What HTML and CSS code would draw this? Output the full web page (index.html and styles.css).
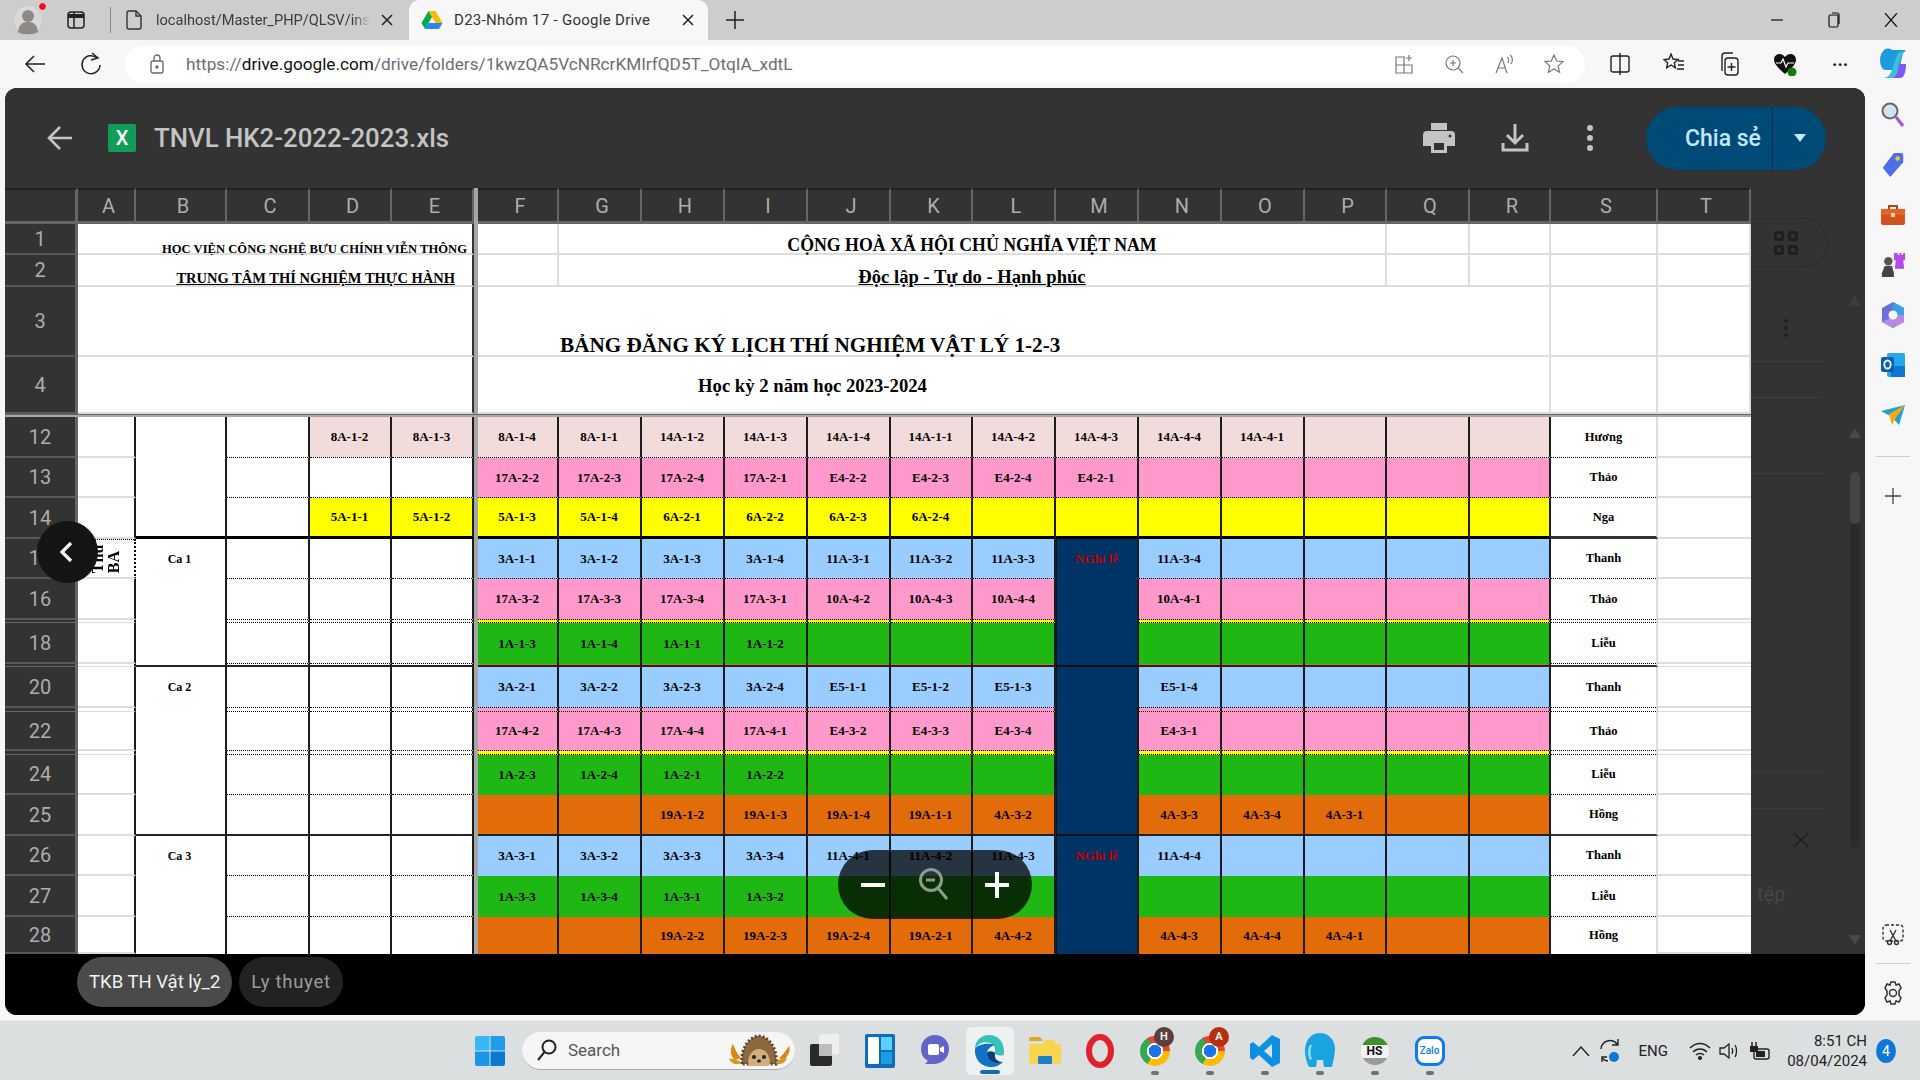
FILE: index.html
```html
<!DOCTYPE html>
<html lang="vi">
<head>
<meta charset="utf-8">
<title>D23-Nhóm 17 - Google Drive</title>
<link rel="stylesheet" href="styles.css">
</head>
<body>
<div class="tabstrip">
  <div class="avatar"><svg width="30" height="30" viewBox="0 0 30 30"><circle cx="15" cy="15" r="14" fill="#d8d8d8"/><circle cx="15" cy="11" r="6" fill="#8d8a86"/><path d="M5 27c1-8 5-10 10-10s9 2 10 10c-3 3-17 3-20 0z" fill="#8d8a86"/></svg><i class="reddot"></i></div>
  <svg class="vtabs" width="20" height="20" viewBox="0 0 20 20" fill="none" stroke="#222" stroke-width="1.5"><rect x="2" y="2" width="16" height="16" rx="3"/><path d="M8 2v16"/><path d="M2 6h16" stroke-width="4"/></svg>
  <i class="tabdiv"></i>
  <div class="tab">
    <svg width="18" height="22" viewBox="0 0 18 22" fill="none" stroke="#333" stroke-width="1.4"><path d="M2 4a2 2 0 0 1 2-2h7l5 5v11a2 2 0 0 1-2 2H4a2 2 0 0 1-2-2z"/><path d="M11 2v5h5"/></svg>
    <span class="tabtext">localhost/Master_PHP/QLSV/inst</span>
    <svg class="tabx" width="12" height="12" viewBox="0 0 12 12" stroke="#222" stroke-width="1.5"><path d="M1 1l10 10M11 1L1 11"/></svg>
  </div>
  <div class="tab active">
    <svg width="22" height="20" viewBox="0 0 22 20"><path d="M7.5 1h7l7 12h-7z" fill="#fbbc04"/><path d="M7.5 1L0.5 13l3.5 6 7-12z" fill="#00ac47"/><path d="M4 19h14l3.500-6H7.500z" fill="#2684fc"/></svg>
    <span class="tabtext">D23-Nhóm 17 - Google Drive</span>
    <svg class="tabx" width="12" height="12" viewBox="0 0 12 12" stroke="#222" stroke-width="1.5"><path d="M1 1l10 10M11 1L1 11"/></svg>
  </div>
  <svg class="newtab" width="20" height="20" viewBox="0 0 20 20" stroke="#222" stroke-width="1.5"><path d="M10 1v18M1 10h18"/></svg>
  <div class="winctl">
    <svg width="14" height="14" viewBox="0 0 14 14" stroke="#111" stroke-width="1.2"><path d="M1 7h12"/></svg>
    <svg width="14" height="16" viewBox="0 0 14 16" fill="none" stroke="#111" stroke-width="1.2"><rect x="2" y="3" width="9" height="12" rx="1.500"/><path d="M5 1h5a2 2 0 0 1 2 2v9"/></svg>
    <svg width="14" height="14" viewBox="0 0 14 14" stroke="#111" stroke-width="1.2"><path d="M1 0l12 14M13 0L1 14"/></svg>
  </div>
</div>

<div class="toolbar">
  <svg class="tool-back" width="22" height="20" viewBox="0 0 22 20" fill="none" stroke="#222" stroke-width="1.6"><path d="M21 10H2M10 2l-8 8 8 8"/></svg>
  <svg class="tool-ref" width="22" height="24" viewBox="0 0 22 24" fill="none" stroke="#222" stroke-width="1.5"><path d="M17 6a9 9 0 1 0 3 7"/><path d="M12 1l6 5-7 2"/></svg>
  <div class="urlbar">
    <svg width="14" height="20" viewBox="0 0 14 20" fill="none" stroke="#666" stroke-width="1.3"><rect x="1" y="7" width="12" height="12" rx="2"/><path d="M4 7V4a3 3 0 0 1 6 0v3"/><circle cx="7" cy="13" r="1" fill="#666"/></svg>
    <span class="url"><span class="url-dim">https://</span><span class="url-host">drive.google.com</span><span class="url-dim">/drive/folders/1kwzQA5VcNRcrKMIrfQD5T_OtqIA_xdtL</span></span>
    <span class="grow"></span>
    <svg width="20" height="20" viewBox="0 0 20 20" fill="none" stroke="#777" stroke-width="1.2"><path d="M11 3H2v16h16v-8H2M10 3v16"/><path d="M15 1v6M12 4h6"/></svg>
    <svg width="20" height="20" viewBox="0 0 20 20" fill="none" stroke="#777" stroke-width="1.2"><circle cx="9" cy="9" r="7"/><path d="M14 14l5 5M9 6v6M6 9h6"/></svg>
    <svg width="20" height="20" viewBox="0 0 20 20" fill="none" stroke="#777" stroke-width="1.2"><path d="M2 19L8 4l5 15M4 14h7M13 3c2 1 2 4 1 6M16 1c3 2 3 6 1 9"/></svg>
    <svg width="20" height="20" viewBox="0 0 20 20" fill="none" stroke="#777" stroke-width="1.2"><path d="M10 1l2.700 6 6.300.6-4.800 4.300 1.400 6.400L10 15l-5.600 3.300 1.400-6.400L1 7.600 7.300 7z"/></svg>
  </div>
  <div class="tool-right">
    <svg width="20" height="22" viewBox="0 0 20 22" fill="none" stroke="#222" stroke-width="1.4"><rect x="1" y="3" width="18" height="16" rx="2"/><path d="M10 0v22"/></svg>
    <svg width="22" height="22" viewBox="0 0 22 22" fill="none" stroke="#222" stroke-width="1.4"><path d="M8 1l2 5 5 .5-3.700 3.300 1 5L8 12l-4.300 2.800 1-5L1 6.500 6 6zM15 8h6M15 12h6M14 16h7"/></svg>
    <svg width="22" height="26" viewBox="0 0 22 26" fill="none" stroke="#222" stroke-width="1.4"><path d="M4 20V5a3 3 0 0 1 3-3h8"/><rect x="7" y="7" width="13" height="17" rx="3"/><path d="M13.500 12v8M9.500 16h8"/></svg>
    <svg width="24" height="24" viewBox="0 0 24 24"><path d="M12 22C5 16 1 12 1 7.500 1 4 4 2 6.500 2 9 2 11 3.500 12 5c1-1.500 3-3 5.500-3C20 2 23 4 23 7.500 23 12 19 16 12 22z" fill="#111"/><path d="M3 11h5l2-4 3 8 2-4h6" fill="none" stroke="#fff" stroke-width="1.200"/><circle cx="19" cy="20" r="4.500" fill="#107c10"/></svg>
    <span class="ell">···</span>
    <svg width="30" height="34" viewBox="0 0 30 34"><path d="M6 3c2-2 6-2 8 0l14 0c-3 2-4 6-5 12l-2 8H8C4 23 2 18 2 13 2 8 4 5 6 3z" fill="#1e9be0"/><path d="M28 4c-3 1-5 4-6 9l-3 12c-1 4-4 6-7 6H4c6 0 8-3 10-8l4-12c1-4 4-7 10-7z" fill="#39c2d7"/><path d="M12 31h10c4 0 6-6 6-14l-6 0-3 8c-1 4-4 6-7 6z" fill="#7b5cf0"/></svg>
  </div>
</div>

<div class="main">
  <div class="viewer">
    <header class="vhead">
      <svg class="vback" width="26" height="26" viewBox="0 0 26 26" fill="none" stroke="#c4c4c4" stroke-width="2.600"><path d="M25 13H3M13 2L2 13l11 11"/></svg>
      <div class="xlicon">X</div>
      <span class="vtitle">TNVL HK2-2022-2023.xls</span>
      <span class="grow"></span>
      <svg class="vact print" width="32" height="30" viewBox="0 0 32 30" fill="#c4c4c4"><path d="M8 0h16v7H8z"/><path fill-rule="evenodd" d="M4 8h24a4 4 0 0 1 4 4v11h-8v7H8v-7H0V12a4 4 0 0 1 4-4zm7 12v7h10v-7z"/><circle cx="27" cy="13" r="1.500" fill="#333"/></svg>
      <svg class="vact dl" width="28" height="28" viewBox="0 0 28 28" fill="none" stroke="#c4c4c4" stroke-width="3"><path d="M14 0v18M6 11l8 8 8-8"/><path d="M2 19v7h24v-7"/></svg>
      <svg class="vact more" width="8" height="26" viewBox="0 0 8 26" fill="#c4c4c4"><circle cx="4" cy="3" r="3"/><circle cx="4" cy="13" r="3"/><circle cx="4" cy="23" r="3"/></svg>
      <div class="share"><span class="share-l">Chia sẻ</span><span class="share-r"><svg width="12" height="8" viewBox="0 0 12 8" fill="#c2e7ff"><path d="M0 0h12L6 8z"/></svg></span></div>
    </header>

    <div class="vbody">
      <div class="sheet">
        <div class="row hd">
          <span class="ch corner"></span><span class="ch">A</span><span class="ch">B</span><span class="ch">C</span><span class="ch">D</span><span class="ch">E</span><span class="sp"></span><span class="ch">F</span><span class="ch">G</span><span class="ch">H</span><span class="ch">I</span><span class="ch">J</span><span class="ch">K</span><span class="ch">L</span><span class="ch">M</span><span class="ch">N</span><span class="ch">O</span><span class="ch">P</span><span class="ch">Q</span><span class="ch">R</span><span class="ch">S</span><span class="ch">T</span>
        </div>
        <div class="row top">
          <span class="rh">1</span><span class="ae org1">HỌC VIỆN CÔNG NGHỆ BƯU CHÍNH VIỄN THÔNG</span><span class="sp"></span><span class="g"></span><span class="gp rep1">CỘNG HOÀ XÃ HỘI CHỦ NGHĨA VIỆT NAM</span><span class="g"></span><span class="g"></span><span class="g"></span><span class="g"></span>
        </div>
        <div class="row top">
          <span class="rh">2</span><span class="ae org2">TRUNG TÂM THÍ NGHIỆM THỰC HÀNH</span><span class="sp"></span><span class="g"></span><span class="gp rep2">Độc lập - Tự do - Hạnh phúc</span><span class="g"></span><span class="g"></span><span class="g"></span><span class="g"></span>
        </div>
        <div class="row top">
          <span class="rh">3</span><span class="ae"></span><span class="sp"></span><span class="fr title">BẢNG ĐĂNG KÝ LỊCH THÍ NGHIỆM VẬT LÝ 1-2-3</span><span class="g"></span><span class="g"></span>
        </div>
        <div class="row top">
          <span class="rh">4</span><span class="ae"></span><span class="sp"></span><span class="fr term">Học kỳ 2 năm học 2023-2024</span><span class="g"></span><span class="g"></span>
        </div>
        <div class="freeze"></div>

        <div class="row lp dot">
          <span class="rh">12</span><span class="a"></span><span class="b"></span><span class="l"></span><span class="d">8A-1-2</span><span class="d">8A-1-3</span><span class="sp"></span><span class="d">8A-1-4</span><span class="d">8A-1-1</span><span class="d">14A-1-2</span><span class="d">14A-1-3</span><span class="d">14A-1-4</span><span class="d">14A-1-1</span><span class="d">14A-4-2</span><span class="d">14A-4-3</span><span class="d">14A-4-4</span><span class="d">14A-4-1</span><span class="d"></span><span class="d"></span><span class="d"></span><span class="s">Hương</span><span class="t"></span>
        </div>
        <div class="row pk dot">
          <span class="rh">13</span><span class="a"></span><span class="b"></span><span class="l"></span><span class="l"></span><span class="l"></span><span class="sp"></span><span class="d">17A-2-2</span><span class="d">17A-2-3</span><span class="d">17A-2-4</span><span class="d">17A-2-1</span><span class="d">E4-2-2</span><span class="d">E4-2-3</span><span class="d">E4-2-4</span><span class="d">E4-2-1</span><span class="d"></span><span class="d"></span><span class="d"></span><span class="d"></span><span class="d"></span><span class="s">Thảo</span><span class="t"></span>
        </div>
        <div class="row ye thick">
          <span class="rh">14</span><span class="a"></span><span class="b"></span><span class="l"></span><span class="d">5A-1-1</span><span class="d">5A-1-2</span><span class="sp"></span><span class="d">5A-1-3</span><span class="d">5A-1-4</span><span class="d">6A-2-1</span><span class="d">6A-2-2</span><span class="d">6A-2-3</span><span class="d">6A-2-4</span><span class="d"></span><span class="d"></span><span class="d"></span><span class="d"></span><span class="d"></span><span class="d"></span><span class="d"></span><span class="s">Nga</span><span class="t"></span>
        </div>
        <div class="row bl dot">
          <span class="rh">15</span><span class="a thu"><span class="vert">Thứ<br>BA</span></span><span class="b">Ca 1</span><span class="l"></span><span class="l"></span><span class="l"></span><span class="sp"></span><span class="d">3A-1-1</span><span class="d">3A-1-2</span><span class="d">3A-1-3</span><span class="d">3A-1-4</span><span class="d">11A-3-1</span><span class="d">11A-3-2</span><span class="d">11A-3-3</span><span class="d n nghi">NGhỉ lễ</span><span class="d">11A-3-4</span><span class="d"></span><span class="d"></span><span class="d"></span><span class="d"></span><span class="s">Thanh</span><span class="t"></span>
        </div>
        <div class="row pk dot">
          <span class="rh">16</span><span class="a"></span><span class="b"></span><span class="l"></span><span class="l"></span><span class="l"></span><span class="sp"></span><span class="d">17A-3-2</span><span class="d">17A-3-3</span><span class="d">17A-3-4</span><span class="d">17A-3-1</span><span class="d">10A-4-2</span><span class="d">10A-4-3</span><span class="d">10A-4-4</span><span class="d n"></span><span class="d">10A-4-1</span><span class="d"></span><span class="d"></span><span class="d"></span><span class="d"></span><span class="s">Thảo</span><span class="t"></span>
        </div>
        <div class="row ye dot sl">
          <span class="rh"></span><span class="a"></span><span class="b"></span><span class="l"></span><span class="l"></span><span class="l"></span><span class="sp"></span><span class="d"></span><span class="d"></span><span class="d"></span><span class="d"></span><span class="d"></span><span class="d"></span><span class="d"></span><span class="d n"></span><span class="d"></span><span class="d"></span><span class="d"></span><span class="d"></span><span class="d"></span><span class="s"></span><span class="t"></span>
        </div>
        <div class="row gr dot">
          <span class="rh">18</span><span class="a"></span><span class="b"></span><span class="l"></span><span class="l"></span><span class="l"></span><span class="sp"></span><span class="d nb">1A-1-3</span><span class="d nb">1A-1-4</span><span class="d nb">1A-1-1</span><span class="d nb">1A-1-2</span><span class="d nb"></span><span class="d nb"></span><span class="d nb"></span><span class="d n"></span><span class="d nb"></span><span class="d nb"></span><span class="d nb"></span><span class="d nb"></span><span class="d nb"></span><span class="s">Liễu</span><span class="t"></span>
        </div>
        <div class="row or sess sl">
          <span class="rh"></span><span class="a"></span><span class="b"></span><span class="l"></span><span class="l"></span><span class="l"></span><span class="sp"></span><span class="d"></span><span class="d"></span><span class="d"></span><span class="d"></span><span class="d"></span><span class="d"></span><span class="d"></span><span class="d n"></span><span class="d"></span><span class="d"></span><span class="d"></span><span class="d"></span><span class="d"></span><span class="s"></span><span class="t"></span>
        </div>
        <div class="row bl dot">
          <span class="rh">20</span><span class="a"></span><span class="b">Ca 2</span><span class="l"></span><span class="l"></span><span class="l"></span><span class="sp"></span><span class="d">3A-2-1</span><span class="d">3A-2-2</span><span class="d">3A-2-3</span><span class="d">3A-2-4</span><span class="d">E5-1-1</span><span class="d">E5-1-2</span><span class="d">E5-1-3</span><span class="d n"></span><span class="d">E5-1-4</span><span class="d"></span><span class="d"></span><span class="d"></span><span class="d"></span><span class="s">Thanh</span><span class="t"></span>
        </div>
        <div class="row pk dot sl">
          <span class="rh"></span><span class="a"></span><span class="b"></span><span class="l"></span><span class="l"></span><span class="l"></span><span class="sp"></span><span class="d"></span><span class="d"></span><span class="d"></span><span class="d"></span><span class="d"></span><span class="d"></span><span class="d"></span><span class="d n"></span><span class="d"></span><span class="d"></span><span class="d"></span><span class="d"></span><span class="d"></span><span class="s"></span><span class="t"></span>
        </div>
        <div class="row pk dot">
          <span class="rh">22</span><span class="a"></span><span class="b"></span><span class="l"></span><span class="l"></span><span class="l"></span><span class="sp"></span><span class="d">17A-4-2</span><span class="d">17A-4-3</span><span class="d">17A-4-4</span><span class="d">17A-4-1</span><span class="d">E4-3-2</span><span class="d">E4-3-3</span><span class="d">E4-3-4</span><span class="d n"></span><span class="d">E4-3-1</span><span class="d"></span><span class="d"></span><span class="d"></span><span class="d"></span><span class="s">Thảo</span><span class="t"></span>
        </div>
        <div class="row ye dot sl">
          <span class="rh"></span><span class="a"></span><span class="b"></span><span class="l"></span><span class="l"></span><span class="l"></span><span class="sp"></span><span class="d"></span><span class="d"></span><span class="d"></span><span class="d"></span><span class="d"></span><span class="d"></span><span class="d"></span><span class="d n"></span><span class="d"></span><span class="d"></span><span class="d"></span><span class="d"></span><span class="d"></span><span class="s"></span><span class="t"></span>
        </div>
        <div class="row gr dot">
          <span class="rh">24</span><span class="a"></span><span class="b"></span><span class="l"></span><span class="l"></span><span class="l"></span><span class="sp"></span><span class="d nb">1A-2-3</span><span class="d nb">1A-2-4</span><span class="d nb">1A-2-1</span><span class="d nb">1A-2-2</span><span class="d nb"></span><span class="d nb"></span><span class="d nb"></span><span class="d n"></span><span class="d nb"></span><span class="d nb"></span><span class="d nb"></span><span class="d nb"></span><span class="d nb"></span><span class="s">Liễu</span><span class="t"></span>
        </div>
        <div class="row or sess">
          <span class="rh">25</span><span class="a"></span><span class="b"></span><span class="l"></span><span class="l"></span><span class="l"></span><span class="sp"></span><span class="d"></span><span class="d"></span><span class="d">19A-1-2</span><span class="d">19A-1-3</span><span class="d">19A-1-4</span><span class="d">19A-1-1</span><span class="d">4A-3-2</span><span class="d n"></span><span class="d">4A-3-3</span><span class="d">4A-3-4</span><span class="d">4A-3-1</span><span class="d"></span><span class="d"></span><span class="s">Hồng</span><span class="t"></span>
        </div>
        <div class="row bl dot">
          <span class="rh">26</span><span class="a"></span><span class="b">Ca 3</span><span class="l"></span><span class="l"></span><span class="l"></span><span class="sp"></span><span class="d nb">3A-3-1</span><span class="d nb">3A-3-2</span><span class="d nb">3A-3-3</span><span class="d nb">3A-3-4</span><span class="d nb">11A-4-1</span><span class="d nb">11A-4-2</span><span class="d nb">11A-4-3</span><span class="d n nghi">NGhỉ lễ</span><span class="d nb">11A-4-4</span><span class="d nb"></span><span class="d nb"></span><span class="d nb"></span><span class="d nb"></span><span class="s">Thanh</span><span class="t"></span>
        </div>
        <div class="row gr dot">
          <span class="rh">27</span><span class="a"></span><span class="b"></span><span class="l"></span><span class="l"></span><span class="l"></span><span class="sp"></span><span class="d nb">1A-3-3</span><span class="d nb">1A-3-4</span><span class="d nb">1A-3-1</span><span class="d nb">1A-3-2</span><span class="d nb"></span><span class="d nb"></span><span class="d nb"></span><span class="d n"></span><span class="d nb"></span><span class="d nb"></span><span class="d nb"></span><span class="d nb"></span><span class="d nb"></span><span class="s">Liễu</span><span class="t"></span>
        </div>
        <div class="row or">
          <span class="rh">28</span><span class="a"></span><span class="b"></span><span class="l"></span><span class="l"></span><span class="l"></span><span class="sp"></span><span class="d"></span><span class="d"></span><span class="d">19A-2-2</span><span class="d">19A-2-3</span><span class="d">19A-2-4</span><span class="d">19A-2-1</span><span class="d">4A-4-2</span><span class="d n"></span><span class="d">4A-4-3</span><span class="d">4A-4-4</span><span class="d">4A-4-1</span><span class="d"></span><span class="d"></span><span class="s">Hồng</span><span class="t"></span>
        </div>
      </div>

      <aside class="pane">
        <div class="pane-main">
          <div class="pane-card"><svg width="24" height="24" viewBox="0 0 24 24" fill="none" stroke="#1f1f1f" stroke-width="3"><rect x="1.500" y="1.500" width="7" height="7" rx="1"/><rect x="15.500" y="1.500" width="7" height="7" rx="1"/><rect x="1.500" y="15.500" width="7" height="7" rx="1"/><rect x="15.500" y="15.500" width="7" height="7" rx="1"/></svg></div>
          <svg class="pane-dots" width="6" height="20" viewBox="0 0 6 20" fill="#222"><circle cx="3" cy="3" r="2"/><circle cx="3" cy="10" r="2"/><circle cx="3" cy="17" r="2"/></svg>
          <i class="pane-line l1"></i><i class="pane-line l2"></i><i class="pane-line l3"></i><i class="pane-line l4"></i><i class="pane-line l5"></i>
          <svg class="pane-x" width="16" height="16" viewBox="0 0 16 16" stroke="#222" stroke-width="1.800"><path d="M1 1l14 14M15 1L1 15"/></svg>
          <span class="pane-text">tệp</span>
        </div>
        <div class="pane-scroll">
          <i class="tri up u1"></i><i class="tri up u2"></i><i class="thumb"></i><i class="track"></i><i class="tri down"></i>
        </div>
      </aside>
    </div>

    <footer class="vtabs-bar"><span class="stab on">TKB TH Vật lý_2</span><span class="stab alt">Ly thuyet</span></footer>

    <div class="circle-back"><svg width="14" height="22" viewBox="0 0 14 22" fill="none" stroke="#fff" stroke-width="3.200"><path d="M12 2L3 11l9 9"/></svg></div>
    <div class="zoompill">
      <svg width="24" height="4" viewBox="0 0 24 4"><path d="M0 0h24v4H0z" fill="#fff"/></svg>
      <svg class="zmid" width="30" height="34" viewBox="0 0 30 34" fill="none" stroke="#8f9a8f" stroke-width="3"><circle cx="13" cy="13" r="10.500"/><path d="M20 21l9 11M8 13h9"/></svg>
      <svg width="24" height="26" viewBox="0 0 24 26"><path d="M10 0h4v11h10v4H14v11h-4V15H0v-4h10z" fill="#fff"/></svg>
    </div>
  </div>

  <aside class="edgebar">
    <svg width="24" height="26" viewBox="0 0 24 26" fill="none"><circle cx="9" cy="9" r="7.500" fill="#cfe3f2" stroke="#666" stroke-width="2"/><path d="M15 15l7 9" stroke="#b04be0" stroke-width="3"/></svg>
    <svg width="24" height="26" viewBox="0 0 24 28"><path d="M13 1h8a2 2 0 0 1 2 2v8L9 27 1 17z" fill="#4c6fe8"/><circle cx="17" cy="7" r="2.500" fill="#f7c531"/></svg>
    <svg width="26" height="26" viewBox="0 0 26 22"><path d="M9 5V2h8v3" fill="none" stroke="#b4431c" stroke-width="2"/><rect x="1" y="5" width="24" height="16" rx="2" fill="#d2521e"/><rect x="1" y="5" width="24" height="6" fill="#e8622a"/><rect x="11" y="9" width="4" height="4" fill="#fbd9a0"/></svg>
    <svg width="26" height="26" viewBox="0 0 26 28"><path d="M16 1h2v2h2V1h2v2h2V1h2v8h-2l1 9H15l1-9h-2V1z" fill="#b44be8"/><circle cx="8" cy="10" r="4.500" fill="#555"/><path d="M4 15h8l2 8v4H1v-4z" fill="#444"/></svg>
    <svg width="24" height="26" viewBox="0 0 24 26"><path d="M12 0l11 6v14l-11 6L1 20V6z" fill="#6b6fdc"/><path d="M12 0l11 6v7l-8 0-3-6z" fill="#3aa0e8"/><path d="M1 20l11 6 11-6V13l-8 0z" fill="#b98ae0"/><circle cx="12" cy="13" r="4.500" fill="#f7f7f7"/></svg>
    <svg width="24" height="26" viewBox="0 0 24 26"><rect x="6" y="1" width="18" height="24" rx="2" fill="#28a8ea"/><path d="M10 14h14v11H10z" fill="#0f78d4"/><rect y="5" width="13" height="15" rx="2" fill="#0a5fb4"/><ellipse cx="6.500" cy="12.500" rx="3.200" ry="4" fill="none" stroke="#fff" stroke-width="1.800"/></svg>
    <svg width="24" height="26" viewBox="0 0 24 20"><path d="M0 6l24-6-6 20-7-8z" fill="#1f9fe0"/><path d="M24 0L8 9l3 11 3-6z" fill="#f7a90b"/></svg>
    <i class="edgesep"></i>
    <svg class="edgeplus" width="16" height="16" viewBox="0 0 16 16" stroke="#444" stroke-width="1.300"><path d="M8 0v16M0 8h16"/></svg>
    <span class="grow"></span>
    <svg width="22" height="26" viewBox="0 0 22 22" fill="none" stroke="#333" stroke-width="1.400"><rect x="1" y="1" width="20" height="16" rx="3" stroke-dasharray="3 2"/><circle cx="7.500" cy="18.500" r="2"/><circle cx="14.500" cy="18.500" r="2"/><path d="M8 17l6-11M14 17L8 6"/></svg>
    <i class="edgesep s2"></i>
    <svg width="22" height="26" viewBox="0 0 22 24" fill="none" stroke="#333" stroke-width="1.500"><path d="M9 1h4l1 3 3-1 2 4-2 3v4l2 3-2 4-3-1-1 3H9l-1-3-3 1-2-4 2-3v-4L3 7l2-4 3 1z"/><circle cx="11" cy="12" r="3.500"/></svg>
  </aside>
</div>

<div class="taskbar">
  <span class="slot win"><svg width="30" height="30" viewBox="0 0 30 30"><path d="M0 2a2 2 0 0 1 2-2h12.500v14.500H0z" fill="#38b7f5"/><path d="M15.500 0H28a2 2 0 0 1 2 2v12.500H15.500z" fill="#1f9dec"/><path d="M0 15.500h14.500V30H2a2 2 0 0 1-2-2z" fill="#1c96e8"/><path d="M15.500 15.500H30V28a2 2 0 0 1-2 2H15.500z" fill="#0a78d4"/></svg></span>
  <div class="search">
    <svg width="20" height="22" viewBox="0 0 20 22" fill="none" stroke="#222" stroke-width="2"><circle cx="12" cy="8" r="6.500"/><path d="M7.500 13L1 21"/></svg>
    <span class="searchtxt">Search</span><span class="grow"></span>
    <svg width="68" height="40" viewBox="0 0 68 40"><path d="M10 30c-4-3-6-10-2-16 2 5 4 10 8 14zM58 30c5-3 8-9 6-14-3 4-6 9-10 12z" fill="#e0851c"/><path d="M14 34c-4 1-8-1-10-5 4-1 8 1 12 3zM52 34c6 1 9-3 10-6-5 0-9 2-12 4z" fill="#c9a21a"/><path d="M17 34c-2-16 8-28 17-28s19 12 17 28z" fill="#8c6a3f" stroke="#5f4526" stroke-width="3" stroke-dasharray="2 2"/><path d="M24 36c-3-8 3-17 10-17s13 9 10 17z" fill="#d3ad7c"/><circle cx="29" cy="27" r="2" fill="#222"/><circle cx="39" cy="27" r="2" fill="#222"/><ellipse cx="34" cy="31" rx="2" ry="1.500" fill="#222"/></svg>
  </div>
  <span class="slot"><svg width="32" height="34" viewBox="0 0 32 34"><rect x="10" y="0" width="20" height="20" rx="2" fill="#efefef"/><rect x="1" y="10" width="22" height="22" rx="2" fill="#2a2a2a"/><rect x="10" y="10" width="13" height="12" fill="#bdbdbd"/></svg></span>
  <span class="slot"><svg width="30" height="34" viewBox="0 0 30 34"><rect width="30" height="34" rx="2" fill="#0f6cbd"/><rect x="3" y="3" width="11" height="27" rx="1" fill="#fff"/><rect x="16" y="3" width="11" height="13" fill="#5ed0fa"/><rect x="16" y="18" width="11" height="12" fill="#1b9de2"/></svg></span>
  <span class="slot"><svg width="30" height="34" viewBox="0 0 30 34"><path d="M15 1a14 14 0 0 1 14 14c0 9-7 15-16 15H5l3-3C3 24 1 20 1 15A14 14 0 0 1 15 1z" fill="#6264c8"/><rect x="8" y="10" width="11" height="11" rx="2" fill="#fff"/><path d="M20 14l4-2v7l-4-2z" fill="#fff"/></svg></span>
  <span class="slot active"><svg width="32" height="34" viewBox="0 0 32 34"><path d="M30 20C31 8 24 1 15 1 7 1 1 7 1 15c3-6 9-8 15-6 4 1 6 5 5 9-6 1 9 6 9 2z" fill="#36c2b4"/><path d="M1 15c-1 11 7 18 16 18 5 0 9-2 12-5-7 3-16 0-16-8 0-5 4-8 8-9-8-3-18 0-20 4z" fill="#0f74c4"/><path d="M13 20c0 8 9 11 16 8-5 0-9-3-8-8 0-3-8-4-8 0z" fill="#0c3d78"/></svg><i class="runbar"></i></span>
  <span class="slot"><svg width="32" height="30" viewBox="0 0 32 30"><path d="M0 8h14l2-4h9l2 4h5v18a2 2 0 0 1-2 2H2a2 2 0 0 1-2-2z" fill="#f7d54e"/><path d="M0 3a2 2 0 0 1 2-2h9l3 4H0z" fill="#e0a820"/><rect x="9" y="20" width="14" height="8" rx="1" fill="#1f7ec8"/></svg></span>
  <span class="slot"><svg width="28" height="34" viewBox="0 0 28 34" fill="none"><ellipse cx="14" cy="17" rx="11" ry="14" stroke="#e0222c" stroke-width="6"/></svg></span>
  <span class="slot"><i class="chrome"></i><i class="badge brown">H</i><i class="dotmark"></i></span>
  <span class="slot"><i class="chrome"></i><i class="badge rust">A</i><i class="dotmark"></i></span>
  <span class="slot"><svg width="30" height="32" viewBox="0 0 30 32"><path d="M22 0l8 4v24l-8 4-13-12-6 5-3-2V9l3-2 6 5zm0 9l-8 7 8 7z" fill="#0f8fe0"/></svg><i class="dotmark"></i></span>
  <span class="slot"><svg width="30" height="36" viewBox="0 0 30 36"><path d="M15 0c9 0 15 7 15 16 0 6-2 12-3 18h-8l-1-7h-6l-1 7H4C2 30 0 24 0 18 0 7 6 0 15 0z" fill="#19a3e0"/><path d="M5 12c-3 3-2 13 0 15l2-1c-2-4-2-10 0-14z" fill="#8fdcf5"/></svg><i class="dotmark"></i></span>
  <span class="slot"><span class="hs">HS</span><i class="dotmark"></i></span>
  <span class="slot"><span class="zalo">Zalo</span><i class="dotmark"></i></span>
  <span class="grow"></span>
  <div class="tray">
    <svg width="18" height="10" viewBox="0 0 18 10" fill="none" stroke="#222" stroke-width="1.400"><path d="M1 10l8-9 8 9"/></svg>
    <svg class="t-sync" width="22" height="26" viewBox="0 0 22 26" fill="none" stroke="#222" stroke-width="1.400"><path d="M2 11a9 9 0 0 1 16-5M19 1v6h-6M3 24v-5h5M3 20a9 9 0 0 0 6 3"/><circle cx="15" cy="19" r="5" fill="#0f78d4" stroke="none"/></svg>
    <span class="eng">ENG</span>
    <svg class="t-wifi" width="22" height="18" viewBox="0 0 22 18" fill="none" stroke="#222" stroke-width="1.500"><path d="M1 6c6-6 14-6 20 0M4 10c4-4 10-4 14 0M7 13c2-2 6-2 8 0"/><circle cx="11" cy="16" r="1.300" fill="#222"/></svg>
    <svg width="20" height="18" viewBox="0 0 20 18" fill="none" stroke="#222" stroke-width="1.300"><path d="M1 6h4l5-4v14l-5-4H1zM13 6c1 2 1 4 0 6M16 3c2 3 2 9 0 12"/></svg>
    <svg class="t-batt" width="20" height="18" viewBox="0 0 20 18"><path d="M2 0v5M6 0v5" stroke="#222" stroke-width="1.500"/><rect y="4" width="8" height="6" fill="#222"/><rect x="4" y="7" width="15" height="10" rx="2" fill="none" stroke="#222" stroke-width="1.400"/><rect x="6" y="9" width="9" height="6" fill="#222"/></svg>
    <div class="clock"><span>8:51 CH</span><span>08/04/2024</span></div>
    <span class="notif">4</span>
  </div>
</div>
</body>
</html>
```

FILE: styles.css
```css
* { box-sizing: border-box; }
html, body { margin: 0; padding: 0; }
body {
  width: 1920px; height: 1080px; overflow: hidden;
  display: grid; grid-template-rows: 40px 48px 932px 60px;
  background: #f7f7f7; color: #111;
  font-family: "Roboto", "Noto Sans", sans-serif;
}
i { display: block; font-style: normal; }
.grow { flex: 1; }

/* browser tabs */
.tabstrip { background: #cdcdcd; display: flex; align-items: center; padding-left: 13px; }
.avatar { position: relative; width: 30px; height: 30px; margin-right: 23px; }
.reddot { position: absolute; top: -3px; right: -4px; width: 9px; height: 9px; border-radius: 50%; background: #e81123; border: 1px solid #eee; }
.vtabs { margin-right: 24px; }
.tabdiv { width: 1px; height: 26px; background: #8a8a8a; margin-right: 14px; }
.tab { height: 40px; display: flex; align-items: center; font-size: 15px; color: #333; position: relative; }
.tab:not(.active) { width: 284px; }
.tab:not(.active) .tabtext { width: 214px; margin-left: 13px; white-space: nowrap; color: #3b3b3b; font-size: 14.600px; -webkit-mask-image: linear-gradient(90deg, #000 92%, transparent); mask-image: linear-gradient(90deg, #000 92%, transparent); }
.tab:not(.active) .tabx { margin-left: 11px; }
.tab.active { width: 299px; background: #f7f7f7; border-radius: 10px 10px 0 0; padding-left: 12px; }
.tab.active .tabtext { width: 228px; margin-left: 11px; white-space: nowrap; letter-spacing: .3px; }
.newtab { margin-left: 17px; }
.winctl { margin-left: auto; display: flex; align-items: center; gap: 43px; padding-right: 22px; }

/* browser toolbar */
.toolbar { display: flex; align-items: center; background: #f7f7f7; padding-left: 24px; position: relative; }
.tool-back { margin-right: 34px; }
.tool-ref { margin-right: 23px; }
.urlbar { width: 1460px; height: 37px; background: #fff; border-radius: 18px; display: flex; align-items: center; padding: 0 21px 0 25px; }
.urlbar > svg:not(:first-child) { margin-left: 30px; }
.url { margin-left: 22px; font-size: 17.200px; white-space: nowrap; }
.url-dim { color: #6b6f73; }
.url-host { color: #111; }
.tool-right { display: flex; align-items: center; margin-left: 25px; gap: 33px; }
.ell { font-size: 18px; font-weight: 700; margin: 0 -3px 0 2px; }

/* main */
.main { display: flex; padding-left: 5px; min-height: 0; }
.viewer { position: relative; width: 1860px; height: 927px; background: #000; border-radius: 12px; overflow: hidden; display: grid; grid-template-rows: 100px 766px 61px; }
.vhead { background: #333; display: flex; align-items: center; padding: 0 39px 0 42px; }
.vback { margin-right: 35px; }
.xlicon { width: 28px; height: 28px; border-radius: 2px; background: #0f9d58; color: #fff; font-size: 20px; font-weight: 500; display: flex; align-items: center; justify-content: center; }
.vtitle { margin-left: 18px; font-size: 25.800px; color: #c4c4c4; white-space: nowrap; font-weight: 500; }
.vact { flex: none; }
.print { margin-right: 46px; }
.dl { margin-right: 57px; }
.more { margin-right: 52px; }
.share { width: 180px; height: 63px; border-radius: 32px; background: #004a77; display: flex; color: #c2e7ff; font-size: 23px; font-weight: 500; overflow: hidden; }
.share-l { width: 127px; padding-left: 39px; display: flex; align-items: center; border-right: 1px solid #0b2c42; white-space: nowrap; }
.share-r { flex: 1; display: flex; align-items: center; justify-content: center; }

.vbody { display: flex; min-height: 0; }
.sheet {
  width: 1746px; flex: none; display: grid; background: #333;
  grid-template-columns: 73px 58px 91px 83px 82px 82px 4px 81px 83px 83px 83px 83px 82px 83px 83px 83px 83px 82px 83px 81px 107px 93px;
  grid-template-rows: 36px 31px 32px 70px 57px 3px 41px 40px 41px 40px 41px 3px 41px 3px 41px 4px 39px 4px 40px 41px 40px 41px 37px;
  font-family: "Liberation Serif", serif; font-weight: 700; font-size: 13px; color: #000;
}
.row { display: contents; }
.sheet span { display: flex; align-items: center; justify-content: center; min-width: 0; white-space: nowrap; background: #fff; }
.sheet .ch { background: #333; color: #adadad; font: 400 20px "Roboto", sans-serif; border-top: 2px solid #222; border-right: 2px solid #666; border-bottom: 3px solid #666; padding-left: 5px; }
.sheet .ch.corner { border-right: 3px solid #666; }
.sheet .rh { background: #333; color: #adadad; font: 400 20px "Roboto", sans-serif; border-bottom: 2px solid #585858; border-right: 3px solid #666; overflow: hidden; }
.sheet .sp { background: #a6a6a6; }
.sheet .ae { grid-column: span 5; border-bottom: 2px solid #ddd; border-right: 2px solid #333; }
.sheet .g { border-bottom: 2px solid #ddd; border-right: 2px solid #ddd; }
.sheet .gp { grid-column: span 10; border-bottom: 2px solid #ddd; border-right: 2px solid #ddd; }
.sheet .fr { grid-column: span 13; border-bottom: 2px solid #ddd; border-right: 2px solid #ddd; justify-content: flex-start; }
.sheet .org1 { justify-content: flex-end; align-items: flex-end; padding: 0 5px 0 0; font-size: 12.600px; line-height: 8px; }
.sheet .org2 { justify-content: flex-end; align-items: flex-end; padding: 0 17px 0 0; font-size: 14.500px; line-height: 13px; text-decoration: underline; }
.sheet .rep1 { font-size: 17.800px; align-items: flex-end; line-height: 15px; }
.sheet .rep2 { font-size: 18.600px; align-items: flex-end; line-height: 17px; text-decoration: underline; }
.sheet .title { font-size: 21.200px; align-items: flex-end; padding: 0 0 0 82px; line-height: 20px; }
.sheet .term { font-size: 18.700px; padding: 2px 0 0 220px; }
.freeze { grid-column: 1 / -1; background: #a8a8a8; border-top: 1px solid #666; }

/* data rows */
.sheet .a { border-bottom: 2px solid #ddd; border-right: 2px solid #1c1c1c; }
.sheet .b { border-right: 2px solid #1c1c1c; font-size: 12px; font-weight: 700; padding-right: 2px; }
.sheet .l { border-right: 2px solid #1c1c1c; }
.sheet .d { border-right: 2px solid #1c1c1c; padding-right: 1px; }
.sheet .s { border-right: 2px solid #ddd; font-size: 12.500px; }
.sheet .t { border-bottom: 2px solid #ddd; }
.lp .d { background: #f2dcdb !important; }
.pk .d { background: #ff99cc !important; }
.ye .d { background: #ffff00 !important; }
.bl .d { background: #99ccff !important; }
.gr .d { background: #1fb714 !important; }
.or .d { background: #e26b0a !important; }
.sheet .dot .l, .sheet .dot .d, .sheet .dot .s { border-bottom: 1px dotted #000; }
.sheet .dot .d.nb { border-bottom: 0; }
.sheet .thick .b, .sheet .thick .l, .sheet .thick .d { border-bottom: 3px solid #000; }
.sheet .thick .s { border-bottom: 3px solid #333; }
.sheet .sess .b, .sheet .sess .l, .sheet .sess .d { border-bottom: 2px solid #222; }
.sheet .sess .s { border-bottom: 2px solid #333; }
.sheet .sl .rh { border-bottom: 1px solid #666; }
.sheet .sl .a, .sheet .sl .t { border-bottom: 1px solid #ddd; }
.sheet .row .d.n, .sheet .row .d.n.nghi { background: #003366 !important; border-bottom: 0; border-left: 1px solid #111; }
.sheet .sess .d.n { border-bottom: 2px solid #111; }
.sheet .row .nghi { color: #c00000; font-size: 13px; }
.sheet .thu { position: relative; border-top: 1px dotted #000; border-right: 2px dotted #000; }
.sheet .vert { position: absolute; left: 12px; bottom: 4px; background: transparent; writing-mode: vertical-rl; transform: rotate(180deg); font-size: 16px; line-height: 16px; text-align: left; white-space: nowrap; display: block; }

/* right pane behind the sheet */
.pane { flex: 1; background: #333; display: flex; }
.pane-main { flex: 1; position: relative; }
.pane-card { width: 77px; height: 49px; margin-top: 30px; border: 1px solid #2a2a2a; border-left: 0; border-radius: 0 25px 25px 0; display: flex; align-items: center; padding-left: 23px; }
.pane-dots { display: block; margin: 51px 0 0 32px; }
.pane-line { width: 72px; height: 1px; background: #3d3d3d; }
.l1 { margin-top: 23px; }
.l2 { margin-top: 35px; }
.l3 { margin-top: 75px; }
.l4 { margin-top: 298px; }
.l5 { margin-top: 35px; }
.pane-x { position: absolute; left: 42px; top: 644px; }
.pane-text { position: absolute; left: 6px; top: 694px; font-size: 20px; color: #474747; }
.pane-scroll { width: 20px; display: flex; flex-direction: column; align-items: center; flex: none; }
.tri { width: 0; height: 0; border-left: 6px solid transparent; border-right: 6px solid transparent; flex: none; }
.tri.up { border-bottom: 10px solid #3d3d3d; }
.tri.u1 { margin-top: 108px; }
.tri.u2 { margin-top: 122px; border-bottom-color: #484848; }
.thumb { width: 10px; height: 52px; background: #454545; border-radius: 5px; margin-top: 34px; flex: none; }
.track { width: 10px; height: 324px; background: #2b2b2b; border-radius: 0 0 5px 5px; flex: none; }
.tri.down { margin-top: 87px; border-top: 10px solid #484848; }

/* sheet tabs */
.vtabs-bar { background: #000; display: flex; gap: 7px; padding: 3px 0 0 72px; align-items: flex-start; }
.stab { height: 50px; padding: 0 12px; border-radius: 25px; background: #222; color: #9b9b9b; font-size: 18.500px; display: flex; align-items: center; white-space: nowrap; }
.stab.on { background: #4a4a4a; color: #f2f2f2; }
.stab.alt { letter-spacing: .7px; }

/* overlays */
.circle-back { position: absolute; left: 32px; top: 433px; width: 61px; height: 62px; border-radius: 50%; background: #141414; display: flex; align-items: center; justify-content: center; padding-right: 3px; }
.zoompill { position: absolute; left: 833px; top: 762px; width: 194px; height: 69px; border-radius: 35px; background: rgba(0,0,0,.75); display: flex; align-items: center; justify-content: space-between; padding: 0 23px 0 23px; }
.zmid { margin: -2px 4px 0 0; }

/* edge sidebar */
.edgebar { flex: 1; display: flex; flex-direction: column; align-items: center; padding: 14px 0 14px; gap: 24px; height: 932px; }
.edgebar > svg { flex: none; }
.edgesep { width: 34px; height: 1px; background: #cfcfcf; flex: none; margin-top: 4px; }
.edgeplus { margin-top: 7px; }
.edgesep.s2 { margin: -9px 0 -8px; }

/* taskbar */
.taskbar { background: #dcdfe0; display: flex; align-items: center; padding-left: 461px; border-top: 1px solid #e4e6e7; }
.slot { width: 55px; height: 48px; position: relative; display: flex; align-items: center; justify-content: center; flex: none; }
.slot.active { background: #eef0f1; border-radius: 5px; width: 48px; margin: 0 3.500px; }
.win { width: 57px; margin-right: 4px; }
.search { width: 273px; height: 38px; border-radius: 19px; background: #f6f6f6; border-bottom: 1px solid #aaa; display: flex; align-items: center; padding: 0 2px 0 15px; margin-right: 2px; }
.searchtxt { margin-left: 11px; font-size: 17px; color: #555; }
.runbar { position: absolute; bottom: 1px; left: 14px; width: 20px; height: 4px; border-radius: 2px; background: #0f6cbd; }
.dotmark { position: absolute; bottom: 0; left: 50%; margin-left: -4px; width: 8px; height: 4px; border-radius: 2px; background: #707070; }
.chrome { width: 30px; height: 30px; border-radius: 50%; background: radial-gradient(circle, #1a73e8 0 6px, #fff 6.500px 8px, transparent 8.500px), conic-gradient(from -30deg, #ea4335 0 120deg, #fbbc04 120deg 240deg, #34a853 240deg 360deg); }
.badge { position: absolute; top: 0; left: 27px; width: 20px; height: 20px; border-radius: 50%; color: #eee; font-size: 11px; font-weight: 700; display: flex; align-items: center; justify-content: center; }
.brown { background: #5a4036; }
.rust { background: #b5300e; }
.hs { width: 28px; height: 28px; border-radius: 50%; background: linear-gradient(#3f8f2c 0 30%, #f4f4f4 30% 75%, #9a9a9a 75%); color: #111; font-size: 12px; font-weight: 700; display: flex; align-items: center; justify-content: center; }
.zalo { width: 30px; height: 30px; border-radius: 9px; background: #fff; border: 3px solid #0a7cf0; color: #0a7cf0; font-size: 10px; font-weight: 500; display: flex; align-items: center; justify-content: center; }
.tray { display: flex; align-items: center; padding-right: 24px; }
.t-sync { margin-left: 9px; }
.eng { margin-left: 18px; font-size: 15px; color: #222; }
.t-wifi { margin-left: 21px; margin-right: 8px; }
.t-batt { margin-left: 11px; }
.clock { margin-left: 2px; width: 95px; display: flex; flex-direction: column; align-items: flex-end; font-size: 15px; line-height: 20px; color: #222; }
.notif { margin-left: 9px; width: 20px; height: 24px; border-radius: 50%; background: #0f78d4; color: #fff; font-size: 14px; display: flex; align-items: center; justify-content: center; }
```
